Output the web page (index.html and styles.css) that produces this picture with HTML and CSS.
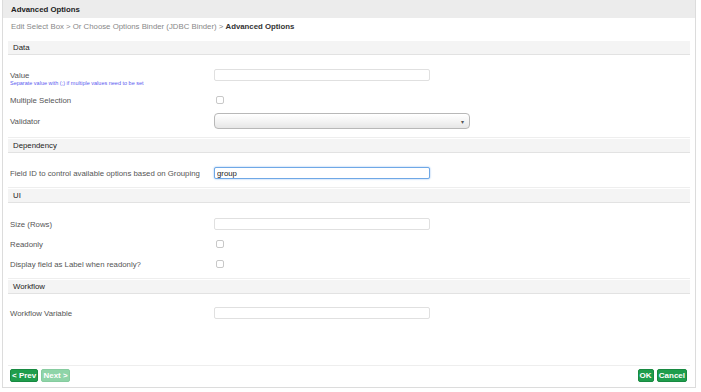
FILE: index.html
```html
<!DOCTYPE html>
<html lang="en">
<head>
<meta charset="UTF-8" />
<meta name="viewport" content="width=device-width, initial-scale=1" />
<title>Advanced Options</title>
<link rel="stylesheet" href="styles.css">
</head>
<body>

<div class="frame">
  <div class="title-bar">Advanced Options</div>
  <div class="crumbs">Edit Select Box &gt; Or Choose Options Binder (JDBC Binder) &gt; <b>Advanced Options</b></div>

  <div class="content">
    <div class="section">
      <div class="section-head">Data</div>
      <div class="section-body body-data">
        <div class="row row-value">
          <div class="label">Value<div class="hint">Separate value with (;) if multiple values need to be set</div></div>
          <div><input class="text" type="text"></div>
        </div>
        <div class="row">
          <div class="label">Multiple Selection</div>
          <div><span class="check"></span></div>
        </div>
        <div class="row row-select">
          <div class="label">Validator</div>
          <div><div class="select"><span class="arrow">&#9662;</span></div></div>
        </div>
      </div>
    </div>

    <div class="section">
      <div class="section-head">Dependency</div>
      <div class="section-body body-dep">
        <div class="row">
          <div class="label">Field ID to control available options based on Grouping</div>
          <div><input class="text focus" type="text" value="group"></div>
        </div>
      </div>
    </div>

    <div class="section">
      <div class="section-head">UI</div>
      <div class="section-body body-ui">
        <div class="row">
          <div class="label">Size (Rows)</div>
          <div><input class="text" type="text"></div>
        </div>
        <div class="row">
          <div class="label">Readonly</div>
          <div><span class="check"></span></div>
        </div>
        <div class="row">
          <div class="label">Display field as Label when readonly?</div>
          <div><span class="check"></span></div>
        </div>
      </div>
    </div>

    <div class="section last">
      <div class="section-head">Workflow</div>
      <div class="section-body">
        <div class="row">
          <div class="label">Workflow Variable</div>
          <div><input class="text" type="text"></div>
        </div>
      </div>
    </div>
  </div>

  <div class="footer">
    <div class="nav">
      <button class="btn">&lt; Prev</button>
      <button class="btn disabled">Next &gt;</button>
    </div>
    <div class="actions">
      <button class="btn">OK</button>
      <button class="btn">Cancel</button>
    </div>
  </div>
</div>

</body>
</html>
```

FILE: styles.css
```css
body {
  margin: 0;
  background: #fff;
  font-family: 'Liberation Sans', Arial, Helvetica, sans-serif;
  font-size: 7.8px;
  color: #555;
}

.frame {
  margin: 0 0 0 2px;
  width: 692px;
  height: 387px;
  border: 1px solid #dcdcdc;
  border-top: none;
  display: flex;
  flex-direction: column;
}

.title-bar {
  height: 18px;
  line-height: 19px;
  background: #ececec;
  padding-left: 8px;
  font-weight: bold;
  color: #222;
}

.crumbs {
  padding: 2px 8px 0;
  height: 17px;
  color: #888;
  line-height: 14px;
}

.crumbs b {
  color: #333;
}

.content {
  flex: 1;
  padding: 4px 5px 0;
}

.section {
  border-bottom: 1px solid #eee;
  margin-bottom: 1px;
}

.section.last {
  border-bottom: none;
}

.section-head {
  height: 13px;
  line-height: 14px;
  background: #f4f4f4;
  border-bottom: 1px solid #e2e2e2;
  padding-left: 5px;
  color: #222;
}

.section-body {
  padding: 9px 0 5px;
}

.body-data {
  padding-top: 10px;
}

.body-dep {
  padding: 10px 0 4px;
}

.body-ui {
  padding: 11px 0 4px;
}

.row {
  display: grid;
  grid-template-columns: 204px 1fr;
  align-items: center;
  min-height: 20px;
  padding-left: 2px;
}

.row-value {
  min-height: 25px;
  align-items: start;
  padding-top: 4px;
  box-sizing: border-box;
}

.row-select {
  min-height: 22px;
}

.label {
  line-height: 11px;
}

.row-value .label {
  margin-top: 1px;
}

.hint {
  color: #5b5bf0;
  font-size: 5.5px;
  line-height: 5px;
}

.text {
  display: block;
  box-sizing: border-box;
  width: 216px;
  height: 12px;
  border: 1px solid #e0e0e0;
  border-radius: 2px;
  padding: 0 2px;
  font-family: inherit;
  font-size: 7.8px;
  color: #222;
  outline: none;
}

.text.focus {
  border: 1px solid #6fa8e6;
  box-shadow: 0 0 2px #8ab8ee;
}

.check {
  display: block;
  width: 6px;
  height: 6px;
  margin-left: 2px;
  border: 1px solid #c8c8c8;
  border-radius: 2px;
}

.select {
  box-sizing: border-box;
  width: 256px;
  height: 16px;
  border: 1px solid #b8b8b8;
  border-radius: 4px;
  background: linear-gradient(#fff, #f4f4f4 50%, #e6e6e6);
  display: flex;
  justify-content: flex-end;
  align-items: center;
  padding-right: 5px;
}

.arrow {
  font-size: 6px;
  color: #555;
}

.footer {
  border-top: 1px solid #eee;
  margin: 0 5px;
  padding: 3px 3px 0 2px;
  height: 18px;
  display: flex;
  justify-content: space-between;
  align-items: flex-start;
}

.btn {
  font-family: inherit;
  font-size: 8px;
  font-weight: bold;
  color: #fff;
  background: #1f9d4c;
  border: 1px solid #188a41;
  border-radius: 2px;
  height: 13px;
  padding: 0 1px;
  line-height: 11px;
  margin-right: 1px;
}

.btn.disabled {
  background: #8fd4a8;
  border-color: #86cc9f;
}

.actions .btn:last-child {
  margin-right: 0;
}
```
